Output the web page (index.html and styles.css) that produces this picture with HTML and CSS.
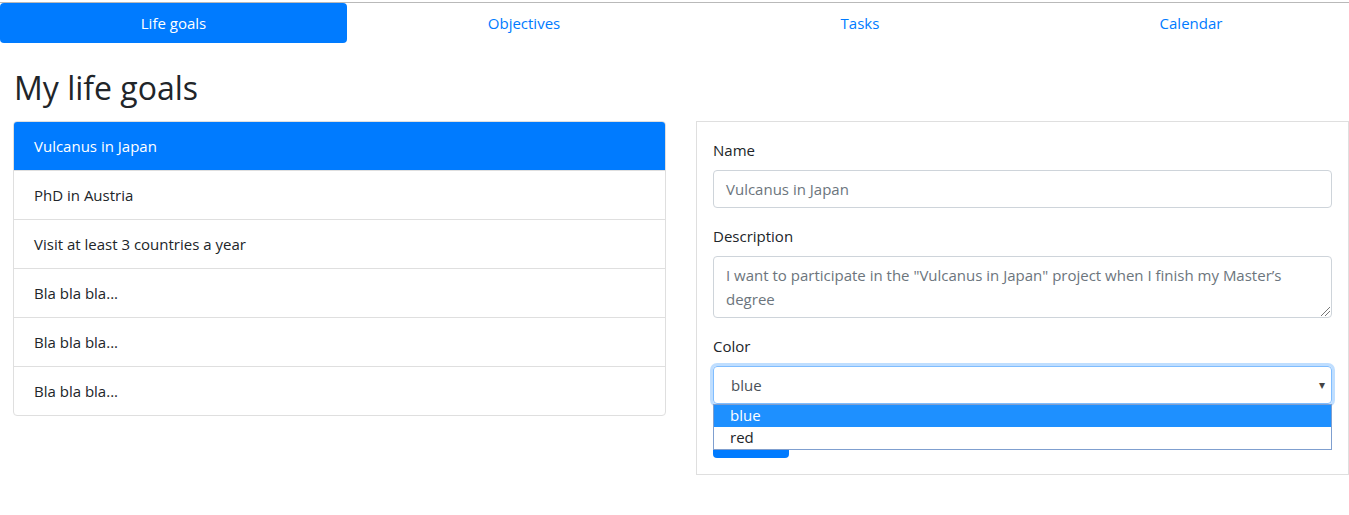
FILE: index.html
```html
<!DOCTYPE html>
<html lang="en">
<head>
<meta charset="utf-8">
<title>My life goals</title>
<link rel="stylesheet" href="styles.css">
</head>
<body>
<div class="topline"></div>
<nav class="tabs">
  <a class="tab active" href="#">Life goals</a>
  <a class="tab" href="#">Objectives</a>
  <a class="tab" href="#">Tasks</a>
  <a class="tab" href="#">Calendar</a>
</nav>
<main class="page">
  <h2 class="title">My life goals</h2>
  <div class="columns">
    <ul class="goal-list">
      <li class="goal active">Vulcanus in Japan</li>
      <li class="goal">PhD in Austria</li>
      <li class="goal">Visit at least 3 countries a year</li>
      <li class="goal">Bla bla bla...</li>
      <li class="goal">Bla bla bla...</li>
      <li class="goal">Bla bla bla...</li>
    </ul>
    <section class="card">
      <div class="field">
        <label class="label">Name</label>
        <div class="control">Vulcanus in Japan</div>
      </div>
      <div class="field">
        <label class="label">Description</label>
        <div class="control area">I want to participate in the "Vulcanus in Japan" project when I finish my Master’s<br>degree<span class="grip"></span></div>
      </div>
      <div class="field">
        <label class="label">Color</label>
        <div class="select-wrap">
          <div class="control select">blue<span class="caret">▾</span></div>
          <ul class="options">
            <li class="option hl">blue</li>
            <li class="option">red</li>
          </ul>
        </div>
      </div>
      <div class="btn"></div>
    </section>
  </div>
</main>
</body>
</html>
```
FILE: styles.css
```css
* { box-sizing: border-box; }
html, body { margin: 0; padding: 0; }
body {
  font-family: "Open Sans", "Noto Sans", sans-serif;
  font-size: 15px;
  line-height: 24px;
  color: #212529;
  background: #fff;
  width: 1349px;
  overflow: hidden;
}
.topline { height: 3px; border-bottom: 1px solid #b9b9b9; }
.tabs {
  display: grid;
  grid-template-columns: 347px 354px 318px 344px;
  height: 40px;
}
.tab {
  display: block;
  text-align: center;
  padding: 8px 16px;
  color: #007bff;
  text-decoration: none;
  border-radius: 4px;
}
.tab.active { background: #007bff; color: #fff; }
.page { padding: 0 0 0 13px; }
.title {
  margin: 25px 0 13px 1px;
  font-size: 32px;
  line-height: 40px;
  font-weight: 500;
}
.columns {
  display: grid;
  grid-template-columns: 653px 653px;
  column-gap: 30px;
  align-items: start;
}
.goal-list {
  list-style: none;
  margin: 0;
  padding: 0;
  border: 1px solid #dfdfdf;
  border-radius: 4px;
  overflow: hidden;
}
.goal {
  padding: 12px 20px;
  border-top: 1px solid #dfdfdf;
  height: 49px;
}
.goal:first-child { border-top: 0; height: 48px; }
.goal.active { background: #007bff; color: #fff; }
.card {
  border: 1px solid #dfdfdf;
  padding: 16px;
  height: 354px;
}
.field { margin-bottom: 16px; }
.label { display: block; margin-bottom: 8px; }
.control {
  border: 1px solid #ced4da;
  border-radius: 4px;
  height: 38px;
  padding: 6px 12px;
  color: #6c757d;
}
.area { height: 62px; position: relative; }
.grip {
  position: absolute;
  right: 1px; bottom: 1px;
  width: 9px; height: 9px;
  background: linear-gradient(135deg, transparent 0 45%, #777 45% 52%, transparent 52% 68%, #777 68% 75%, transparent 75%);
}
.select-wrap { position: relative; }
.select {
  border-color: #80bdff;
  box-shadow: 0 0 0 3px rgba(0,123,255,.25);
  padding-left: 17px;
  display: flex;
  justify-content: space-between;
  color: #495057;
}
.caret { font-size: 12px; color: #444; margin-right: -6px; }
.options {
  position: absolute;
  left: 0; right: 0; top: 38px;
  margin: 0; padding: 0;
  list-style: none;
  border: 1px solid #7f9fcf;
  background: #fff;
  z-index: 2;
}
.option { height: 22px; line-height: 21px; padding-left: 16px; color: #212529; }
.option.hl { background: #1e90ff; color: #fff; }
.btn {
  width: 76px; height: 38px;
  background: #007bff;
  border-radius: 4px;
}
```
